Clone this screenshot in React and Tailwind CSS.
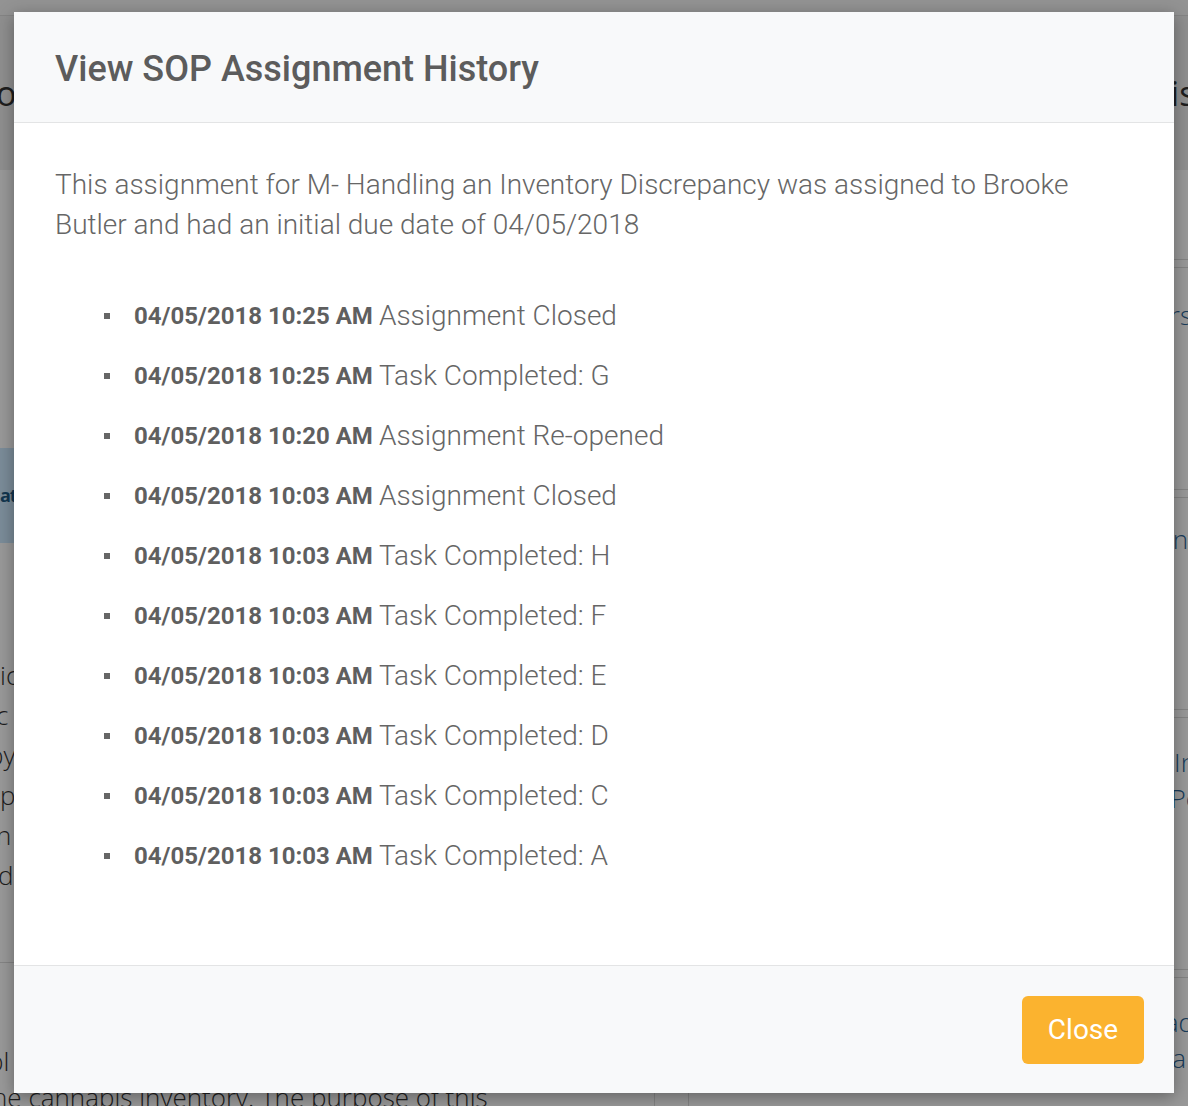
export default function App() {
  const items = [
    ["04/05/2018 10:25 AM", "Assignment Closed"],
    ["04/05/2018 10:25 AM", "Task Completed: G"],
    ["04/05/2018 10:20 AM", "Assignment Re-opened"],
    ["04/05/2018 10:03 AM", "Assignment Closed"],
    ["04/05/2018 10:03 AM", "Task Completed: H"],
    ["04/05/2018 10:03 AM", "Task Completed: F"],
    ["04/05/2018 10:03 AM", "Task Completed: E"],
    ["04/05/2018 10:03 AM", "Task Completed: D"],
    ["04/05/2018 10:03 AM", "Task Completed: C"],
    ["04/05/2018 10:03 AM", "Task Completed: A"],
  ];
  return (
    <div className="relative w-[1188px] h-[1106px] overflow-hidden bg-white font-['Open_Sans',sans-serif]">
      {/* background page */}
      <div className="flex flex-col h-full">
        <div className="h-[16px] shrink-0 bg-[#f5f5f5] border-b border-[#dddddd]" />
        <div className="flex flex-1 gap-[33px]">
          <div className="w-[655px] flex flex-col border-r border-[#dddddd]">
            <div className="h-[154px] shrink-0 bg-[#eeeeee] flex items-center text-[34px] text-[#333] whitespace-nowrap -ml-[4px]">
              oc SOP Details
            </div>
            <div className="h-[278px] shrink-0" />
            <div className="h-[95px] shrink-0 bg-[#cdeaff] flex items-center text-[18px] font-bold text-[#1f5a85] whitespace-nowrap tracking-[-1px]">
              at
            </div>
            <div className="h-[112px] shrink-0" />
            <div className="flex flex-col text-[26px] font-light text-[#333] leading-[40px] whitespace-nowrap">
              <div>ic</div>
              <div className="-ml-[4px]"> c</div>
              <div className="-ml-[12px]">by</div>
              <div> p</div>
              <div className="-ml-[4px]">n</div>
              <div className="-ml-[2px]">d</div>
            </div>
            <div className="h-[68px] shrink-0 border-b border-[#dddddd]" />
            <div className="h-[80px] shrink-0" />
            <div className="text-[26px] font-light text-[#333] leading-[36px] whitespace-nowrap -ml-[12px]">
              pl
            </div>
            <div className="text-[26px] font-light text-[#333] leading-[36px] whitespace-nowrap -ml-[8px]">
              he cannabis inventory. The purpose of this
            </div>
          </div>
          <div className="flex-1 flex flex-col border-l border-[#dddddd]">
            <div className="h-[154px] shrink-0 bg-[#eeeeee] flex items-center text-[34px] text-[#333] whitespace-nowrap justify-end -mr-[16px]">
              Revisi
            </div>
            <div className="h-[90px] shrink-0 border-b border-[#dddddd]" />
            <div className="h-[8px] shrink-0 border-b border-[#dddddd]" />
            <div className="h-[222px] shrink-0 border-b border-[#dddddd] flex items-start justify-end pt-[28px] text-[26px] font-light text-[#2a6496] -mr-[4px]">Users</div>
            <div className="h-[8px] shrink-0 border-b border-[#dddddd]" />
            <div className="h-[212px] shrink-0 border-b border-[#dddddd] flex items-start justify-end pt-[22px] text-[26px] font-light text-[#2a6496] -mr-[12px] whitespace-nowrap">Inv</div>
            <div className="h-[8px] shrink-0 border-b border-[#dddddd]" />
            <div className="h-[252px] shrink-0 border-b border-[#dddddd] flex flex-col items-end pt-[26px] text-[26px] font-light text-[#2a6496] leading-[36px] -mr-[8px]">
              <div>In</div>
              <div className="-mr-[4px]">Pe</div>
            </div>
            <div className="h-[8px] shrink-0 border-b border-[#dddddd]" />
            <div className="flex flex-col items-end pt-[26px] text-[26px] font-light text-[#2a6496] leading-[36px]">
              <div className="-mr-[6px]">ad</div>
              <div className="mr-[2px]">a</div>
            </div>
          </div>
        </div>
      </div>

      {/* overlay */}
      <div className="absolute inset-0 bg-black/40" />

      {/* modal */}
      <div className="absolute left-[14px] top-[12px] w-[1160px] bg-white shadow-[0_4px_16px_rgba(0,0,0,0.35)] font-['Roboto',sans-serif]">
        <div className="h-[111px] bg-[#f8f9fa] border-b border-[#e3e4e5] flex items-center px-[41px]">
          <h2 className="text-[36px] font-medium text-[#5c5c5c] leading-none mt-[4px]">
            View SOP Assignment History
          </h2>
        </div>
        <div className="h-[842px] px-[41px] pt-[42px]">
          <p className="text-[28px] font-light text-[#666666] leading-[40px]">
            This assignment for M- Handling an Inventory Discrepancy was assigned to Brooke Butler and had an initial due date of 04/05/2018
          </p>
          <ul className="mt-[51px] pl-[49px] flex flex-col gap-[20px]">
            {items.map(([d, t], i) => (
              <li key={i} className="flex items-center h-[40px] text-[28px] leading-[40px] text-[#666666] whitespace-nowrap">
                <span className="w-[6px] h-[6px] bg-[#666666] mr-[24px] shrink-0" />
                <span className="font-bold text-[#5f5f5f] text-[24px]">{d}</span>
                <span className="font-light ml-[6px]">{t}</span>
              </li>
            ))}
          </ul>
        </div>
        <div className="h-[128px] bg-[#f8f9fa] border-t border-[#e3e4e5] flex items-center justify-end pr-[30px]">
          <button className="w-[122px] h-[68px] rounded-[6px] bg-[#fbb32f] text-white text-[28px] font-normal">
            Close
          </button>
        </div>
      </div>
    </div>
  );
}
